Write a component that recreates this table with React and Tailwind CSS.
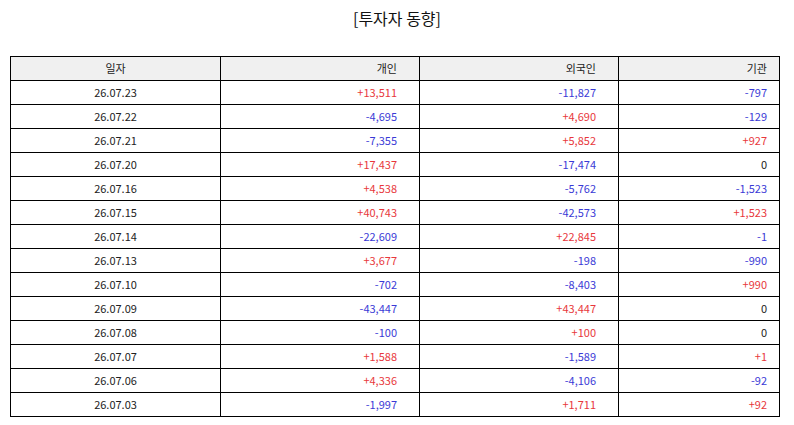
const rows = [
  ['26.07.23', '+13,511', '-11,827', '-797'],
  ['26.07.22', '-4,695', '+4,690', '-129'],
  ['26.07.21', '-7,355', '+5,852', '+927'],
  ['26.07.20', '+17,437', '-17,474', '0'],
  ['26.07.16', '+4,538', '-5,762', '-1,523'],
  ['26.07.15', '+40,743', '-42,573', '+1,523'],
  ['26.07.14', '-22,609', '+22,845', '-1'],
  ['26.07.13', '+3,677', '-198', '-990'],
  ['26.07.10', '-702', '-8,403', '+990'],
  ['26.07.09', '-43,447', '+43,447', '0'],
  ['26.07.08', '-100', '+100', '0'],
  ['26.07.07', '+1,588', '-1,589', '+1'],
  ['26.07.06', '+4,336', '-4,106', '-92'],
  ['26.07.03', '-1,997', '+1,711', '+92'],
];

const tone = (v) => {
  if (v.startsWith('+')) return 'text-[#e8373c]';
  if (v.startsWith('-')) return 'text-[#3a3ad6]';
  return 'text-[#222]';
};

const cell = 'h-[24px] border-r border-b border-black flex items-center text-[11px]';

const App = () => {
  return (
    <div
      className="w-[794px] h-[425px] bg-white overflow-hidden"
      style={{ fontFamily: '"Noto Sans CJK KR", "Noto Sans", sans-serif' }}
    >
      {/* Title */}
      <div className="h-[37px] pt-[5px] text-center text-[16px] text-[#111] leading-[26px]">
        [투자자 동향]
      </div>

      {/* Table */}
      <div className="ml-[10px] mt-[19px] w-[770px] border-t border-l border-black grid grid-cols-[210px_199px_199px_161px]">
        <div className={`${cell} justify-center bg-[#f0f0f0] text-[#222]`}>일자</div>
        <div className={`${cell} justify-end pr-[22px] bg-[#f0f0f0] text-[#222]`}>개인</div>
        <div className={`${cell} justify-end pr-[22px] bg-[#f0f0f0] text-[#222]`}>외국인</div>
        <div className={`${cell} justify-end pr-[12px] bg-[#f0f0f0] text-[#222]`}>기관</div>

        {rows.map((r) => (
          <div key={r[0]} className="contents">
            <div className={`${cell} justify-center text-[#222]`}>{r[0]}</div>
            <div className={`${cell} justify-end pr-[22px] ${tone(r[1])}`}>{r[1]}</div>
            <div className={`${cell} justify-end pr-[22px] ${tone(r[2])}`}>{r[2]}</div>
            <div className={`${cell} justify-end pr-[12px] ${tone(r[3])}`}>{r[3]}</div>
          </div>
        ))}
      </div>
    </div>
  );
};

export default App;
